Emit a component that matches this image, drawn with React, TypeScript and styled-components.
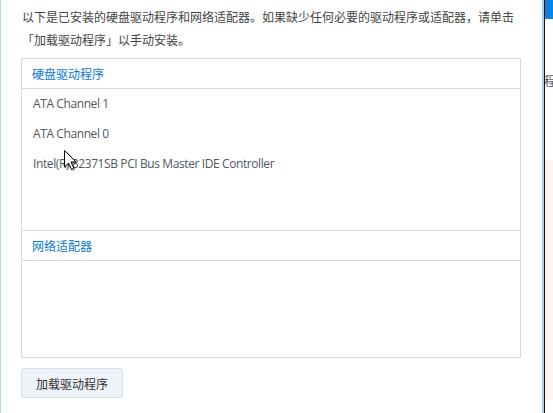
import React from 'react';
import styled, { createGlobalStyle } from 'styled-components';

type Section = {
    title: string;
    items: string[];
    bodyHeight: number;
}

const sections: Section[] = [
    {
        title: '硬盘驱动程序',
        items: ['ATA Channel 1', 'ATA Channel 0', 'Intel(R) 82371SB PCI Bus Master IDE Controller'],
        bodyHeight: 141,
    },
    {
        title: '网络适配器',
        items: [],
        bodyHeight: 96,
    },
];

const App = () => {
    return (
        <>
            <GlobalStyle />
            <Page>
                <LeftEdge />
                <Main>
                    <Intro>
                        以下是已安装的硬盘驱动程序和网络适配器。如果缺少任何必要的驱动程序或适配器，请单击「加载驱动程序」以手动安装。
                    </Intro>
                    <Panel>
                        {sections.map((section, index) => (
                            <React.Fragment key={section.title}>
                                <SectionHeader first={index === 0}>{section.title}</SectionHeader>
                                <SectionBody height={section.bodyHeight}>
                                    {section.items.map(item => (
                                        <Item key={item}>{item}</Item>
                                    ))}
                                </SectionBody>
                            </React.Fragment>
                        ))}
                    </Panel>
                    <Button>加载驱动程序</Button>
                    <Cursor width={13} height={21} viewBox="0 0 13 21">
                        <path d="M0.5 0.5 L0.5 17 L4.5 13 L7.5 19.5 L10 18.5 L7 12 L12 12 Z" fill="#fff" stroke="#000" strokeWidth={1} strokeLinejoin="miter" />
                    </Cursor>
                </Main>
                <RightEdge>
                    <BlueTab />
                    <PeekText>程序</PeekText>
                    <PinkArea />
                </RightEdge>
            </Page>
        </>
    );
}

const GlobalStyle = createGlobalStyle`
  html, body {
    margin: 0;
    padding: 0;
    background: #fff;
  }
  body {
    font-family: "Open Sans", "Noto Sans CJK SC", sans-serif;
    font-size: 12px;
  }
`;

const Page = styled.div`
  display: flex;
  width: 553px;
  height: 413px;
  overflow: hidden;
  background: #fff;
`;

const LeftEdge = styled.div`
  width: 1px;
  background: #b7d4f1;
`;

const Main = styled.div`
  position: relative;
  width: 541px;
  padding: 5px 21px 0 20px;
  box-sizing: border-box;
  display: flex;
  flex-direction: column;
  align-items: flex-start;
`;

const Intro = styled.p`
  margin: 0 0 7px 1px;
  line-height: 23px;
  color: #444;
  font-family: "Noto Sans CJK SC", sans-serif;
`;

const Panel = styled.div`
  width: 500px;
  box-sizing: border-box;
  border: 1px solid #d3dde6;
`;

const SectionHeader = styled.div<{first?: boolean}>`
  height: 29px;
  line-height: 29px;
  padding: 0 10px;
  color: #0a78d4;
  font-family: "Noto Sans CJK SC", sans-serif;
  border-top: ${({first}) => first ? 'none' : '1px solid #d3dde6'};
  border-bottom: 1px solid #d3dde6;
`;

const SectionBody = styled.div<{height: number}>`
  height: ${({height}) => height}px;
  display: flex;
  flex-direction: column;
`;

const Item = styled.div`
  height: 30px;
  line-height: 30px;
  padding: 0 11px;
  color: #505861;
  letter-spacing: -0.4px;
  white-space: nowrap;
`;

const Button = styled.button`
  margin-top: 10px;
  width: 102px;
  height: 30px;
  padding: 0;
  border: 1px solid #d8dfea;
  border-radius: 3px;
  background: #eef2f9;
  color: #333;
  font-family: "Noto Sans CJK SC", sans-serif;
  font-size: 12px;
`;

const Cursor = styled.svg`
  position: absolute;
  left: 63px;
  top: 150px;
  filter: drop-shadow(1px 1px 1px rgba(0, 0, 0, 0.35));
`;

const RightEdge = styled.div`
  position: relative;
  width: 11px;
  border-left: 2px solid #a9cdee;
  box-sizing: border-box;
  display: flex;
  flex-direction: column;
  padding-left: 1px;
  &::before {
    content: '';
    position: absolute;
    left: 0;
    top: 0;
    bottom: 0;
    width: 1px;
    background: #111;
  }
`;

const BlueTab = styled.div`
  height: 19px;
  background: #0a84e0;
`;

const PeekText = styled.div`
  margin-top: 52px;
  height: 20px;
  line-height: 20px;
  margin-left: -1px;
  white-space: nowrap;
  overflow: hidden;
  color: #555;
  font-family: "Noto Sans CJK SC", sans-serif;
  font-size: 12px;
`;

const PinkArea = styled.div`
  margin-top: 69px;
  height: 240px;
  background: #fff4f4;
`;

export default App;
